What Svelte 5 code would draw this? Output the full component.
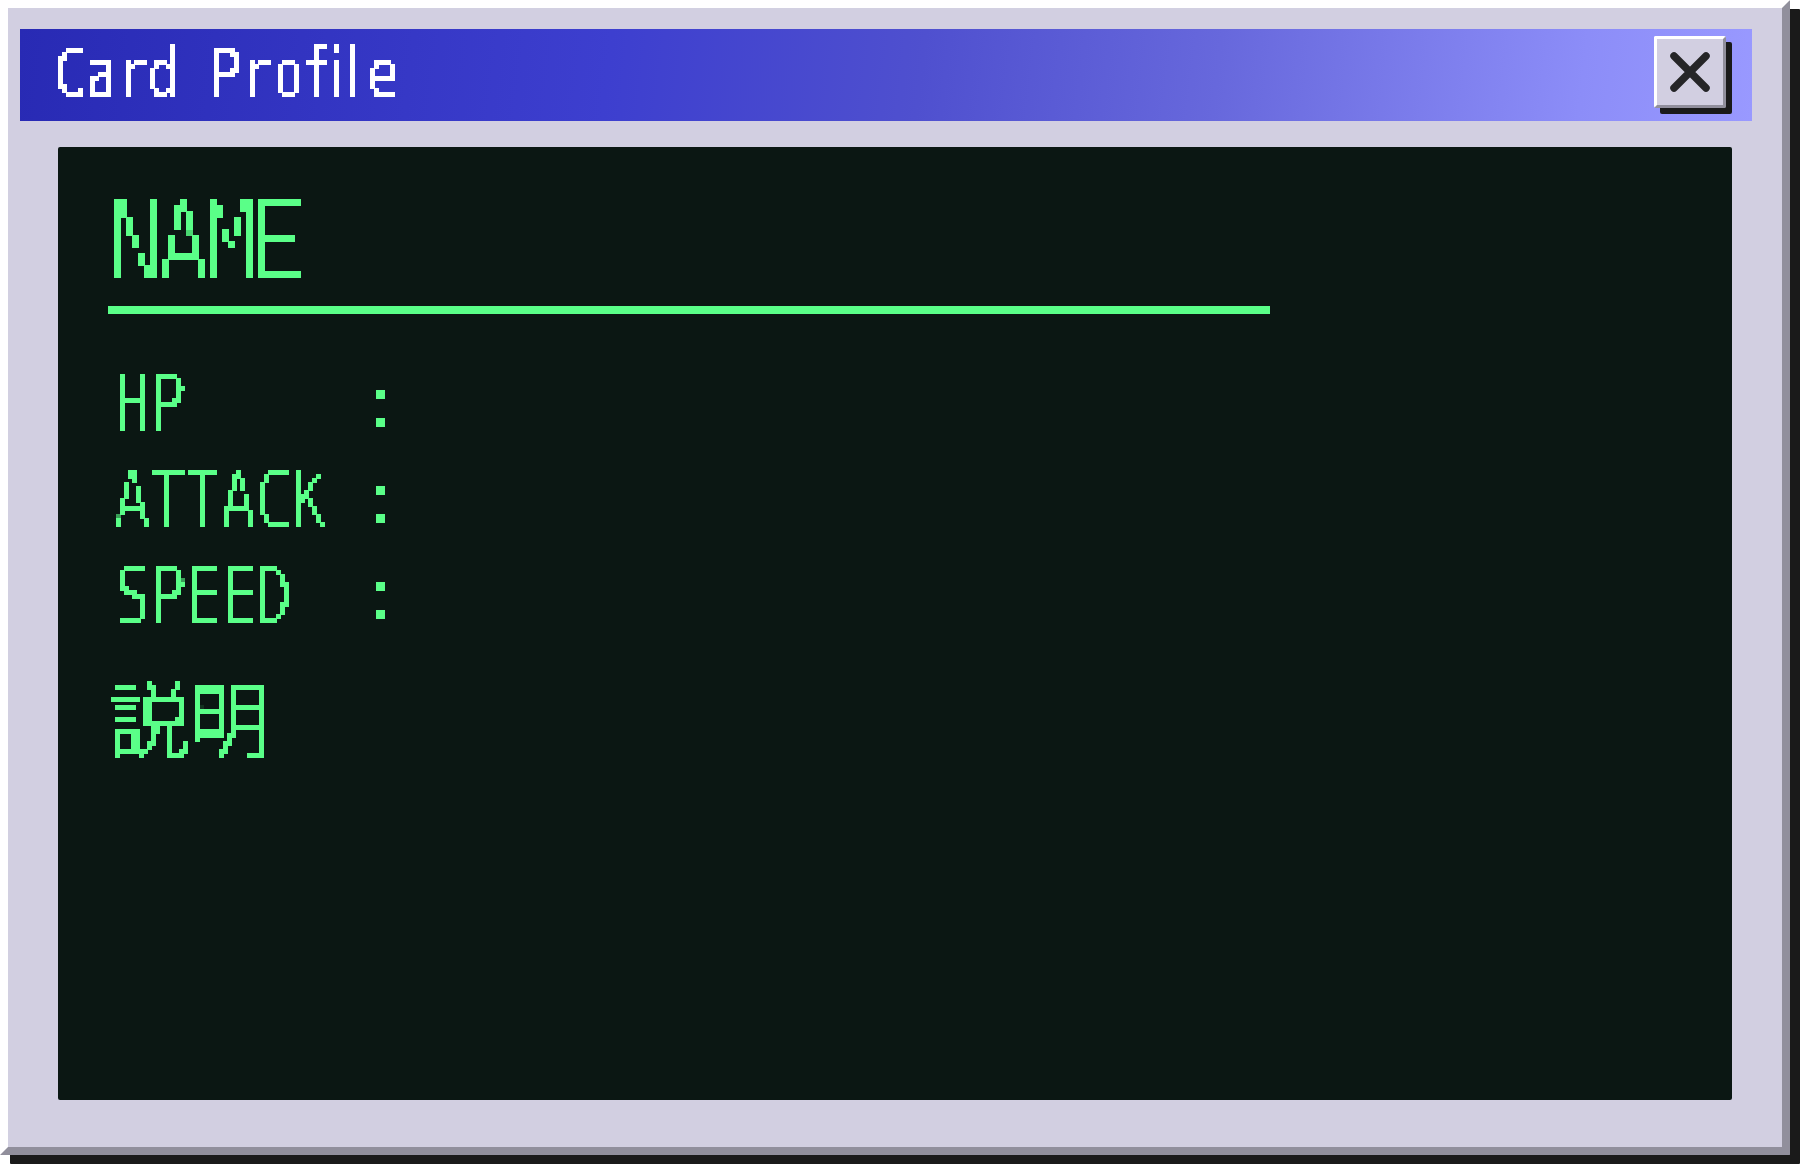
<script>
  const stats = ['HP', 'ATTACK', 'SPEED'];
  // Capitals that fill their cell from edge to edge
  const isWide = (ch) => 'NMEHSPDC'.includes(ch);
  // Pixel grids: g is the cell size; dx and dy thin the strokes to about one cell
  const grids = [
    { id: 'px-title', g: 4, dx: 1, dy: 1 },
    { id: 'px-name', g: 6, dx: 2, dy: 2 },
    { id: 'px-stat', g: 4, dx: 2, dy: 2 },
    { id: 'px-kanji', g: 4, dx: 1, dy: 1 }
  ];
</script>

{#snippet letters(text)}
  <span class="tall">{#each text as ch}<span class:wide={isWide(ch)} class:a={ch === 'A'} class:e={ch === 'E'}>{ch}</span>{/each}</span>
{/snippet}

<svg class="defs" width="0" height="0" aria-hidden="true">
  {#each grids as { id, g, dx, dy }}
    <filter {id} x="0" y="0" width="1" height="1" color-interpolation-filters="sRGB">
      <feOffset in="SourceGraphic" {dx} dy="0" result="right" />
      <feComposite in="SourceGraphic" in2="right" operator="in" result="narrow" />
      <feOffset in="narrow" dx="0" {dy} result="down" />
      <feComposite in="narrow" in2="down" operator="in" result="thin" />
      <feFlood x={g / 2} y={g / 2} width="1" height="1" flood-color="#000" result="dot" />
      <feOffset in="dot" x="0" y="0" width={g} height={g} dx="0" dy="0" />
      <feTile result="tile" />
      <feComposite in="thin" in2="tile" operator="in" />
      <feComponentTransfer><feFuncA type="linear" slope="60" intercept="-18" /></feComponentTransfer>
      <feMorphology operator="dilate" radius={g / 2} />
    </filter>
  {/each}
</svg>

<main class="window">
  <header class="titlebar">
    <h1><span class="tall">Card Pro<span class="f">f</span><span class="stem">i</span><span class="stem l">l</span>e</span></h1>
    <button class="close" aria-label="Close">
      <svg viewBox="0 0 66 66"><path d="M17 17 L49 49 M49 17 L17 49" /></svg>
    </button>
  </header>
  <section class="screen">
    <h2>{@render letters('NAME')}</h2>
    <hr />
    <div class="stats">
      {#each stats as label}
        <div class="stat">{@render letters(label)}<span class="colon">:</span></div>
      {/each}
    </div>
    <h3>説明</h3>
  </section>
</main>

<style>
  :global(body) {
    margin: 0;
    min-height: 1164px;
    background: #fff;
    overflow: hidden;
  }
  .defs {
    position: absolute;
  }
  .window {
    box-sizing: border-box;
    width: 1790px;
    height: 1155px;
    padding: 21px 30px 0 12px;
    border: 8px solid;
    border-color: #fffeff #918f9c #918f9c #fffeff;
    border-radius: 1px;
    background: #d2cfe1;
    box-shadow: 10px 9px 0 #1a1a1a;
    font-family: "DejaVu Sans Mono", monospace;
  }
  .titlebar {
    box-sizing: border-box;
    width: 1732px;
    height: 92px;
    padding: 7px 26px 0 34px;
    display: flex;
    justify-content: space-between;
    align-items: flex-start;
    background: linear-gradient(97deg, #282ab4 0%, #3d3fcf 34%, #4f50cf 52%, #6768dc 69%, #8c8df8 90%, #9999ff 100%);
  }
  h1, h2, h3, hr {
    margin: 0;
    font-weight: 400;
  }
  .tall {
    display: inline-block;
    white-space: pre;
    transform: scaleY(1.355);
    transform-origin: 0 100%;
    font-variant-ligatures: none;
  }
  .wide {
    display: inline-block;
    transform: scaleX(1.13);
  }
  h1 {
    height: 80px;
    padding-top: 20px;
    box-sizing: border-box;
    color: #fff;
    font-size: 51.8px;
    line-height: 52px;
    filter: url(#px-title);
  }
  .f {
    margin: 0 -3.5px 0 -4px;
  }
  .stem {
    font-family: "DejaVu Sans", sans-serif;
  }
  .l {
    margin: 0 7px 0 3.4px;
  }
  .close {
    box-sizing: border-box;
    width: 72px;
    height: 72px;
    padding: 0;
    border: 3px solid;
    border-color: #fff #918f9c #918f9c #fff;
    border-radius: 2px;
    background: #d2cfe1;
    box-shadow: 6px 6px 0 #1a1a1a;
  }
  .close svg {
    display: block;
    width: 66px;
    height: 66px;
  }
  .close path {
    stroke: #252527;
    stroke-width: 7.5;
    stroke-linecap: round;
    fill: none;
  }
  .screen {
    box-sizing: border-box;
    width: 1674px;
    height: 953px;
    margin: 26px 0 0 38px;
    padding: 28px 50px 0;
    border-radius: 2px;
    background: #0b1713;
    color: #5aff88;
  }
  h2 {
    height: 131px;
    padding: 34px 0 0 1px;
    box-sizing: border-box;
    font-size: 79.7px;
    line-height: 100px;
    filter: url(#px-name);
  }
  h2 .wide {
    transform: translateX(0.4px) scaleX(1.13);
  }
  h2 .a {
    display: inline-block;
    transform: translateX(1.5px) scaleX(1.04);
  }
  h2 .e {
    transform: translateX(-0.5px) scaleX(1.18);
  }
  hr {
    width: 1162px;
    height: 8px;
    border: 0;
    background: #5aff88;
  }
  .stats {
    height: 340px;
    box-sizing: border-box;
    padding: 63px 0 0 6px;
    filter: url(#px-stat);
  }
  .stat {
    height: 96.7px;
    font-size: 58.6px;
    line-height: 80px;
  }
  .stat .tall {
    width: 247px;
  }
  .stat .wide {
    transform: scaleX(1.07);
  }
  .stat .a {
    display: inline-block;
    transform: translateX(-0.5px) scaleX(1.06);
  }
  .colon {
    display: inline-block;
    transform: translateY(-15px) scale(1.2);
  }
  h3 {
    margin-top: 11px;
    margin-left: -1px;
    font: 400 82px/100px "Noto Sans CJK JP", sans-serif;
    filter: url(#px-kanji);
  }
</style>
